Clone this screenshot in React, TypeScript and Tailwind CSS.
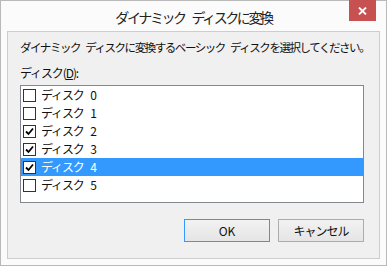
import { useState } from 'react';

// Disk entries shown in the list box
const disks = [
  { name: 'ディスク 0', checked: false },
  { name: 'ディスク 1', checked: false },
  { name: 'ディスク 2', checked: true },
  { name: 'ディスク 3', checked: true },
  { name: 'ディスク 4', checked: true },
  { name: 'ディスク 5', checked: false },
];

const font = "font-['Noto_Sans_CJK_JP','Noto_Sans',sans-serif]";

// Small classic checkbox
const Check = ({ on }: { on: boolean }) => (
  <span className="w-[13px] h-[13px] border border-[#333] bg-white flex items-center justify-center shrink-0">
    {on && (
      <svg width="9" height="9" viewBox="0 0 9 9">
        <path d="M1 4.5 L3.5 7 L8 1.5" stroke="#000" strokeWidth="1.8" fill="none" />
      </svg>
    )}
  </span>
);

const App = () => {
  const [selected, setSelected] = useState(4);

  return (
    <div className={`w-[387px] h-[266px] bg-[#fbfbfb] border border-[#b9b9b9] flex flex-col ${font}`}>
      {/* Title bar */}
      <div className="h-[30px] relative flex items-center justify-center">
        <span className="text-[14px] tracking-[-2.4px] [word-spacing:6px] text-[#222] pt-[2px] whitespace-nowrap">ダイナミック ディスクに変換</span>
        <div className="absolute top-[-1px] right-[10px] w-[27px] h-[21px] bg-[#c75050] flex items-center justify-center">
          <svg width="9" height="8" viewBox="0 0 9 8">
            <path d="M1 0.5 L8 7.5 M8 0.5 L1 7.5" stroke="#fff" strokeWidth="1.8" />
          </svg>
        </div>
      </div>

      {/* Client area */}
      <div className="mx-[6px] mb-[6px] flex-1 bg-[#f0f0f0] border border-[#cdcdcd] flex flex-col text-[12px] tracking-[-1.1px] [word-spacing:4px] text-[#111]">
        <p className="pl-[12px] mt-[8px] leading-[15px] whitespace-nowrap text-[11.5px] tracking-[-1.45px]">
          ダイナミック ディスクに変換するベーシック ディスクを選択してください。
        </p>
        <p className="pl-[12px] mt-[10px] leading-[15px]">
          ディスク(<span className="underline">D</span>):
        </p>

        <div className="ml-[12px] mr-[15px] mt-[5px] h-[118px] bg-white border border-[#828790]">
          {disks.map((d, i) => (
            <div
              key={d.name}
              onClick={() => setSelected(i)}
              className={`h-[18px] flex items-center gap-[5px] pl-[2px] ${
                i === selected ? 'bg-[#3399ff] text-white' : ''
              }`}
            >
              <Check on={d.checked} />
              <span className="[word-spacing:5px]">{d.name}</span>
            </div>
          ))}
        </div>

        <div className="flex justify-end gap-[8px] mr-[15px] mt-[16px] tracking-normal">
          <button className="w-[86px] h-[23px] text-[12px] text-[#111] border border-[#3399ff] bg-gradient-to-b from-[#f2f2f2] to-[#e5e5e5]">
            OK
          </button>
          <button className="w-[86px] h-[23px] text-[12px] tracking-[-1px] text-[#111] border border-[#acacac] bg-gradient-to-b from-[#f2f2f2] to-[#e5e5e5]">
            キャンセル
          </button>
        </div>
      </div>
    </div>
  );
};

export default App;
